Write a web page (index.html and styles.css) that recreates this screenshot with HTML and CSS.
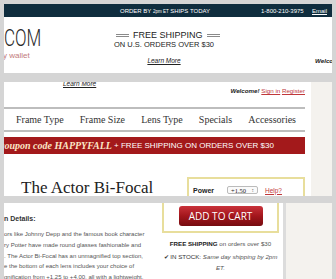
FILE: index.html
```html
<!DOCTYPE html>
<html lang="en">
<head>
    <meta charset="UTF-8">
    <meta name="viewport" content="width=device-width, initial-scale=1.0">
    <title>The Actor Bi-Focal</title>
    <link rel="stylesheet" href="styles.css">
</head>
<body>
    <!-- шапка сайта -->
    <div class="slice slice-header">
        <div class="topbar">
            <span class="topbar-order">ORDER BY <small>2pm ET</small> SHIPS TODAY</span>
            <span class="topbar-phone">1-800-210-3975</span>
            <a class="topbar-link" href="#">Email</a>
        </div>
        <div class="masthead">
            <div class="logo">
                <span class="logo-name">COM</span>
                <span class="logo-tag">y wallet</span>
            </div>
            <div class="promo">
                <div class="promo-title"><span class="rule"></span>FREE SHIPPING<span class="rule"></span></div>
                <div class="promo-sub">ON U.S. ORDERS OVER $30</div>
                <a class="promo-link" href="#">Learn More</a>
            </div>
            <div class="account">Welcome!</div>
        </div>
    </div>

    <!-- меню и заголовок товара -->
    <div class="slice slice-nav">
        <div class="page">
            <a class="promo-link promo-link-cut" href="#">Learn More</a>
            <div class="account-bar">
                <b>Welcome!</b> <a href="#">Sign in</a> <a href="#">Register</a>
            </div>
            <nav class="menu">
                <a href="#">Frame Type</a>
                <a href="#">Frame Size</a>
                <a href="#">Lens Type</a>
                <a href="#">Specials</a>
                <a href="#">Accessories</a>
            </nav>
            <div class="coupon">
                <span class="coupon-code">coupon code HAPPYFALL</span>&nbsp;+ FREE SHIPPING ON ORDERS OVER $30
            </div>
            <div class="product-head">
                <h1 class="product-title">The Actor Bi-Focal</h1>
                <div class="buy-box buy-box-top">
                    <div class="option-row">
                        <span class="option-label">Power</span>
                        <span class="option-select">+1.50 <i>&#8597;</i></span>
                        <a class="help-link" href="#">Help?</a>
                    </div>
                </div>
            </div>
        </div>
        <div class="side"></div>
    </div>

    <!-- описание и кнопка покупки -->
    <div class="slice slice-details">
        <div class="page page-narrow">
            <div class="details">
                <h2 class="details-title">n Details:</h2>
                <p class="details-text">
                    ors like Johnny Depp and the famous book character<br>
                    ry Potter have made round glasses fashionable and<br>
                    . The Actor Bi-Focal has an unmagnified top section,<br>
                    e the bottom of each lens includes your choice of<br>
                    gnification from +1.25 to +4.00, all with a lightweight,
                </p>
            </div>
            <div class="buy-col">
                <div class="buy-box buy-box-bottom">
                    <button class="cart-btn" type="button">ADD TO CART</button>
                </div>
                <p class="ship-note"><b>FREE SHIPPING</b> on orders over $30</p>
                <p class="stock-note">&#10004; IN STOCK: <em>Same day shipping by 2pm ET.</em></p>
            </div>
        </div>
        <div class="side"></div>
    </div>
</body>
</html>
```

FILE: styles.css
```css
:root {
    --page-bg: #d5d5d5;
    --navy: #0f2d3e;
    --red: #a3191b;
    --link-red: #c0373a;
    --line: #bdbdbd;
    --box-border: #e8de9c;
    --side-bg: #f4f2ee;
    --text: #222;
}

* {
    box-sizing: border-box;
    margin: 0;
    padding: 0;
}

body {
    margin: 0;
    padding: 4px 4px 0;
    background-color: var(--page-bg);
    font-family: 'Liberation Sans', Arial, sans-serif;
    color: var(--text);
}

a {
    color: inherit;
}

.slice {
    overflow: hidden;
    background-color: #fff;
}

/* шапка */
.slice-header {
    height: 69px;
}

.topbar {
    display: flex;
    align-items: center;
    height: 13px;
    padding-left: 116px;
    background-color: var(--navy);
    color: #fff;
    font-size: 6px;
    white-space: nowrap;
}

.topbar-order {
    flex-shrink: 0;
    width: 141px;
}

.topbar-order small {
    font-size: 4.5px;
}

.topbar-phone {
    flex-shrink: 0;
    width: 51px;
}

.topbar-link {
    text-decoration: underline;
}

.masthead {
    display: flex;
    padding-top: 13px;
    white-space: nowrap;
}

.logo {
    flex-shrink: 0;
    width: 108px;
}

.logo-name {
    display: block;
    margin-top: -3px;
    font-family: Roboto, 'Liberation Sans', sans-serif;
    font-weight: 300;
    font-size: 23px;
    line-height: 23px;
    transform: scaleX(0.74);
    transform-origin: left center;
    color: #2a2a2a;
}

.logo-tag {
    display: block;
    margin-top: 1px;
    margin-left: -1px;
    font-size: 8px;
    line-height: 9px;
    color: #c27b7b;
}

.promo {
    flex-shrink: 0;
    width: 104px;
    text-align: center;
}

.promo-title {
    font-size: 9px;
    line-height: 10px;
}

.rule {
    display: inline-block;
    width: 13px;
    height: 3px;
    margin: 0 4px;
    border-top: 1px solid #8a8a8a;
    border-bottom: 1px solid #8a8a8a;
    vertical-align: middle;
}

.promo-sub {
    font-size: 7.5px;
    line-height: 9px;
}

.promo-link {
    display: inline-block;
    font-size: 6.5px;
    line-height: 9px;
    font-style: italic;
}

.account {
    flex-shrink: 0;
    margin-left: 99px;
    margin-top: 27px;
    font-size: 6.2px;
    line-height: 8px;
    font-weight: bold;
    font-style: italic;
}

/* меню */
.slice-nav {
    display: flex;
    height: 114px;
    margin-top: 9px;
}

.page {
    flex-shrink: 0;
    width: 307px;
    padding-right: 6px;
    background-color: #fff;
}

.side {
    flex: 1;
    background-color: var(--side-bg);
}

.promo-link-cut {
    display: block;
    width: 40px;
    margin-top: -2px;
    margin-left: 59px;
    line-height: 7px;
}

.account-bar {
    font-size: 6.2px;
    line-height: 8px;
    text-align: right;
    white-space: nowrap;
}

.account-bar b {
    font-style: italic;
}

.account-bar a {
    color: var(--link-red);
}

.menu {
    display: flex;
    justify-content: space-between;
    align-items: center;
    height: 25px;
    margin-top: 12px;
    padding: 0 9px 0 12px;
    border-top: 2px solid var(--line);
    border-bottom: 2px solid var(--line);
    font-family: 'Liberation Serif', 'Times New Roman', serif;
    font-size: 10px;
}

.menu a {
    color: #333;
    text-decoration: none;
}

.coupon {
    display: flex;
    align-items: center;
    height: 17px;
    margin-top: 5px;
    background-color: var(--red);
    color: #fff;
    font-size: 8px;
    white-space: nowrap;
}

.coupon-code {
    margin-left: -4px;
    font-family: 'Liberation Serif', 'Times New Roman', serif;
    font-size: 10px;
    font-weight: bold;
    font-style: italic;
    color: #fbe6c6;
}

.product-head {
    display: flex;
    margin-top: 23px;
}

.product-title {
    margin: 1px 0 0 17px;
    font-family: 'Liberation Serif', 'Times New Roman', serif;
    font-size: 17px;
    line-height: 20px;
    font-weight: normal;
    color: #222;
}

.buy-box {
    border: 2px solid var(--box-border);
}

.buy-box-top {
    width: 118px;
    height: 40px;
    margin-left: auto;
    padding: 6px 0 0 4px;
}

.option-row {
    display: flex;
    align-items: center;
    height: 10px;
    font-size: 6.5px;
}

.option-label {
    width: 34px;
    font-size: 7px;
    font-weight: bold;
}

.option-select {
    display: flex;
    justify-content: space-between;
    align-items: center;
    width: 31px;
    height: 8px;
    padding: 0 3px;
    border: 1px solid #bbb;
    border-radius: 2px;
    background-color: #fafafa;
    font-family: 'Liberation Serif', serif;
    font-size: 6.5px;
}

.option-select i {
    font-style: normal;
    font-size: 5px;
    color: #666;
}

.help-link {
    margin-left: 7px;
    color: var(--link-red);
}

/* описание */
.slice-details {
    display: flex;
    height: 80px;
    margin-top: 7px;
    background-color: var(--side-bg);
}

.page-narrow {
    display: flex;
    width: 282px;
    padding-right: 0;
    border-right: 3px solid #dcdcdc;
}

.details {
    flex-shrink: 0;
    width: 158px;
    padding-top: 11px;
    white-space: nowrap;
}

.details-title {
    font-size: 7px;
    line-height: 9px;
    font-weight: bold;
    color: #333;
}

.details-text {
    margin-top: 6px;
    font-size: 6px;
    line-height: 10.75px;
    color: #555;
}

.buy-col {
    flex-shrink: 0;
    width: 117px;
    text-align: center;
    font-size: 6.2px;
    line-height: 11px;
    color: #555;
}

.buy-box-bottom {
    margin-top: -10px;
    padding: 13px 0 5px;
    border-top: none;
}

.cart-btn {
    display: block;
    width: 84px;
    height: 20px;
    margin: 0 auto;
    border: none;
    border-radius: 3px;
    background: linear-gradient(to bottom, #c9323a 0%, #a3161c 50%, #760b0f 100%);
    color: #fff;
    font-family: 'Open Sans', 'Liberation Sans', sans-serif;
    font-size: 10px;
}

.ship-note {
    margin-top: 4.5px;
    white-space: nowrap;
}

.ship-note b {
    color: #222;
}

.stock-note {
    margin-top: 2px;
    color: #333;
}

.stock-note em {
    color: #555;
}
```
